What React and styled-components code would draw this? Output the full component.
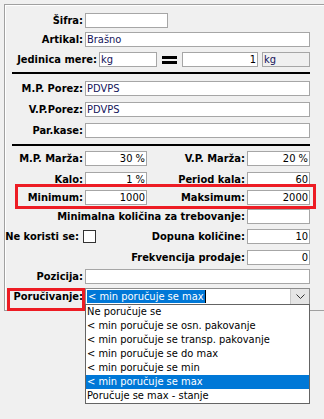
import React from 'react';
import styled, { createGlobalStyle } from 'styled-components';

const GlobalStyle = createGlobalStyle`
  html, body {
    margin: 0;
    padding: 0;
    background: #f0f0f0;
    overflow: hidden;
  }
  body {
    font-family: "DejaVu Sans Condensed", "DejaVu Sans", sans-serif;
    font-size: 11px;
    color: #000;
  }
`;

const Screen = styled.div`
  position: relative;
  width: 324px;
  height: 419px;
  overflow: hidden;
  padding: 4px 0 0 4px;
  box-sizing: border-box;
`;

const Panel = styled.div`
  width: 340px;
  height: 307px;
  box-sizing: border-box;
  border: 1px solid #a0a0a0;
  box-shadow: inset 1px 1px 0 #fff;
  padding-top: 8px;
`;

const Row = styled.div`
  position: relative;
  display: flex;
  align-items: center;
  height: ${p => p.$h || 15}px;
  margin-top: ${p => p.$mt || 0}px;
`;

const Label = styled.div`
  flex: none;
  width: ${p => p.$w}px;
  padding-right: ${p => p.$pr ?? 2}px;
  box-sizing: border-box;
  text-align: right;
  font-weight: bold;
  white-space: nowrap;
  line-height: 15px;
`;

const Field = styled.div`
  flex: none;
  width: ${p => p.$w}px;
  height: 15px;
  margin-left: ${p => p.$ml || 0}px;
  box-sizing: border-box;
  border: 1px solid #a6a6a6;
  background: ${p => (p.$disabled ? '#f0f0f0' : '#fff')};
  color: ${p => (p.$num ? '#000' : '#14145a')};
  text-align: ${p => (p.$num ? 'right' : 'left')};
  padding: 0 1px;
  line-height: 13px;
  white-space: nowrap;
  overflow: hidden;
`;

const Equals = styled.div`
  flex: none;
  width: 15px;
  height: 8px;
  margin-left: 5px;
  box-sizing: border-box;
  border-top: 3px solid #000;
  border-bottom: 3px solid #000;
`;

const Rule = styled.div`
  height: 2px;
  width: 298px;
  margin: ${p => p.$mt}px 0 0 7px;
  background: #000;
`;

const Check = styled.div`
  flex: none;
  width: 13px;
  height: 13px;
  box-sizing: border-box;
  border: 1px solid #333;
  background: #fff;
`;

const Mark = styled.div`
  position: absolute;
  left: ${p => p.$l}px;
  top: ${p => p.$t}px;
  width: ${p => p.$w}px;
  height: ${p => p.$h}px;
  box-sizing: border-box;
  border: 3px solid #ed1c24;
  pointer-events: none;
`;

const Combo = styled.div`
  position: relative;
  flex: none;
  width: 225px;
  height: 17px;
  box-sizing: border-box;
  border: 1px solid #8c8c8c;
  background: #fff;
  display: flex;
  align-items: center;
`;

const ComboText = styled.span`
  margin-left: 1px;
  padding: 0 1px;
  height: 13px;
  line-height: 13px;
  background: #0078d7;
  color: #fff;
  white-space: nowrap;
`;

const Caret = styled.span`
  width: 1px;
  height: 13px;
  background: #000;
`;

const DropButton = styled.div`
  margin-left: auto;
  width: 18px;
  height: 15px;
  background: #e5e5e5;
  border-left: 1px solid #c8c8c8;
  display: flex;
  align-items: center;
  justify-content: center;
`;

const List = styled.div`
  position: absolute;
  left: -1px;
  top: 15px;
  width: 225px;
  box-sizing: border-box;
  border: 1px solid #646464;
  background: #fff;
  z-index: 2;
`;

const Item = styled.div`
  height: 14px;
  line-height: 14px;
  padding-left: 1px;
  white-space: nowrap;
  background: ${p => (p.$active ? '#0078d7' : 'transparent')};
  color: ${p => (p.$active ? '#fff' : '#000')};
`;

const options = [
  'Ne poručuje se',
  '< min poručuje se osn. pakovanje',
  '< min poručuje se transp. pakovanje',
  '< min poručuje se do max',
  '< min poručuje se min',
  '< min poručuje se max',
  'Poručuje se max - stanje',
];

export default function App() {
  const selected = 5;
  return (
    <Screen>
      <GlobalStyle />
      <Panel>
        <Row>
          <Label $w={80}>Šifra:</Label>
          <Field $w={83} />
        </Row>
        <Row $mt={4}>
          <Label $w={80}>Artikal:</Label>
          <Field $w={225}>Brašno</Field>
        </Row>
        <Row $mt={5}>
          <Label $w={94}>Jedinica mere:</Label>
          <Field $w={58}>kg</Field>
          <Equals />
          <Field $w={76} $ml={5} $num>1</Field>
          <Field $w={48} $ml={4} $disabled>kg</Field>
        </Row>
        <Rule $mt={5} />
        <Row $mt={7}>
          <Label $w={80}>M.P. Porez:</Label>
          <Field $w={225}>PDVPS</Field>
        </Row>
        <Row $mt={6}>
          <Label $w={80}>V.P.Porez:</Label>
          <Field $w={225}>PDVPS</Field>
        </Row>
        <Row $mt={6}>
          <Label $w={80}>Par.kase:</Label>
          <Field $w={225} />
        </Row>
        <Rule $mt={6} />
        <Row $mt={5}>
          <Label $w={80}>M.P. Marža:</Label>
          <Field $w={62} $num>30 %</Field>
          <Label $w={100}>V.P. Marža:</Label>
          <Field $w={63} $num>20 %</Field>
        </Row>
        <Row $mt={6}>
          <Label $w={80}>Kalo:</Label>
          <Field $w={62} $num>1 %</Field>
          <Label $w={100}>Period kala:</Label>
          <Field $w={63} $num>60</Field>
        </Row>
        <Row $mt={3}>
          <Label $w={80}>Minimum:</Label>
          <Field $w={62} $num>1000</Field>
          <Label $w={100}>Maksimum:</Label>
          <Field $w={63} $num>2000</Field>
          <Mark $l={10} $t={-6} $w={301} $h={25} />
        </Row>
        <Row $mt={4}>
          <Label $w={242}>Minimalna količina za trebovanje:</Label>
          <Field $w={63} $num />
        </Row>
        <Row $mt={5}>
          <Label $w={78} $pr={4}>Ne koristi se:</Label>
          <Check />
          <Label $w={151}>Dopuna količine:</Label>
          <Field $w={63} $num>10</Field>
        </Row>
        <Row $mt={6}>
          <Label $w={242}>Frekvencija prodaje:</Label>
          <Field $w={63} $num>0</Field>
        </Row>
        <Row $mt={4}>
          <Label $w={80}>Pozicija:</Label>
          <Field $w={225} />
        </Row>
        <Row $mt={4} $h={17}>
          <Label $w={80}>Poručivanje:</Label>
          <Combo>
            <ComboText>{options[selected]}</ComboText>
            <Caret />
            <DropButton>
              <svg width="9" height="5" viewBox="0 0 9 5">
                <path d="M0.5 0.5 L4.5 4.5 L8.5 0.5" fill="none" stroke="#333" strokeWidth="1" />
              </svg>
            </DropButton>
            <List>
              {options.map((o, i) => (
                <Item key={o} $active={i === selected}>{o}</Item>
              ))}
            </List>
          </Combo>
          <Mark $l={2} $t={0} $w={78} $h={23} />
        </Row>
      </Panel>
    </Screen>
  );
}
